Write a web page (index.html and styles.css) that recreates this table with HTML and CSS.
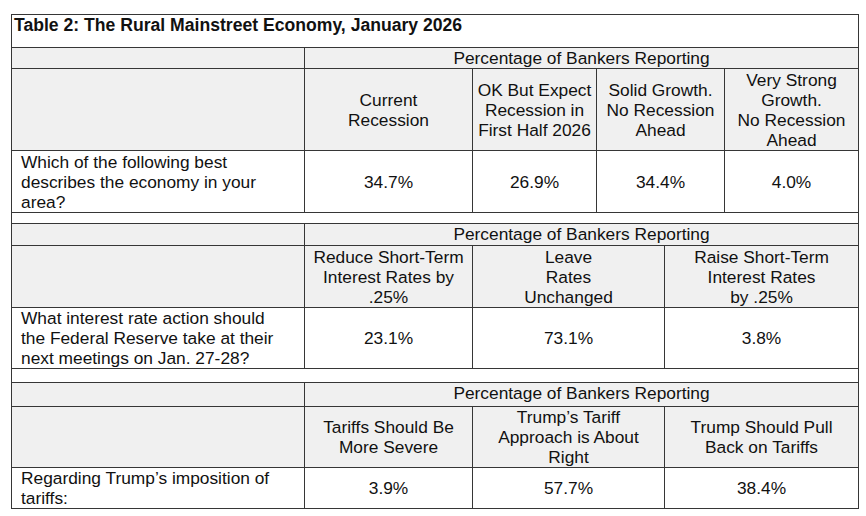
FILE: index.html
```html
<!DOCTYPE html>
<html lang="en">
<head>
<meta charset="utf-8">
<title>Table 2: The Rural Mainstreet Economy, January 2026</title>
<link rel="stylesheet" href="styles.css">
</head>
<body>
<table class="survey">
  <colgroup>
    <col class="c1"><col class="c2"><col class="c3"><col class="c4"><col class="c5"><col class="c6">
  </colgroup>
  <tbody>
    <tr class="r-title"><td colspan="6" class="title">Table 2: The Rural Mainstreet Economy, January 2026</td></tr>

    <tr class="r-pct1 pct-row"><td></td><td colspan="5" class="pct">Percentage of Bankers Reporting</td></tr>
    <tr class="r-h1 head-row">
      <td></td>
      <td>Current<br>Recession</td>
      <td>OK But Expect<br>Recession in<br>First Half 2026</td>
      <td colspan="2">Solid Growth.<br>No Recession<br>Ahead</td>
      <td>Very Strong<br>Growth.<br>No Recession<br>Ahead</td>
    </tr>
    <tr class="r-d1 data-row">
      <td class="q">Which of the following best<br>describes the economy in your<br>area?</td>
      <td>34.7%</td><td>26.9%</td><td colspan="2">34.4%</td><td>4.0%</td>
    </tr>
    <tr class="r-s1 spacer"><td colspan="6"></td></tr>

    <tr class="r-pct2 pct-row"><td></td><td colspan="5" class="pct">Percentage of Bankers Reporting</td></tr>
    <tr class="r-h2 head-row">
      <td></td>
      <td>Reduce Short-Term<br>Interest Rates by<br>.25%</td>
      <td colspan="2">Leave<br>Rates<br>Unchanged</td>
      <td colspan="2">Raise Short-Term<br>Interest Rates<br>by .25%</td>
    </tr>
    <tr class="r-d2 data-row">
      <td class="q">What interest rate action should<br>the Federal Reserve take at their<br>next meetings on Jan. 27-28?</td>
      <td>23.1%</td><td colspan="2">73.1%</td><td colspan="2">3.8%</td>
    </tr>
    <tr class="r-s2 spacer"><td colspan="6"></td></tr>

    <tr class="r-pct3 pct-row"><td></td><td colspan="5" class="pct">Percentage of Bankers Reporting</td></tr>
    <tr class="r-h3 head-row">
      <td></td>
      <td>Tariffs Should Be<br>More Severe</td>
      <td colspan="2">Trump’s Tariff<br>Approach is About<br>Right</td>
      <td colspan="2">Trump Should Pull<br>Back on Tariffs</td>
    </tr>
    <tr class="r-d3 data-row">
      <td class="q">Regarding Trump’s imposition of<br>tariffs:</td>
      <td>3.9%</td><td colspan="2">57.7%</td><td colspan="2">38.4%</td>
    </tr>
  </tbody>
</table>
</body>
</html>
```

FILE: styles.css
```css
html, body {
  margin: 0;
  padding: 0;
  background: #ffffff;
}

body {
  padding: 14px 0 0 11px;
  font-family: "Liberation Sans", Arial, sans-serif;
  font-size: 17.33px;
  line-height: 20px;
  color: #111111;
}

.survey {
  border-collapse: collapse;
  table-layout: fixed;
  width: 847px;
}

.c1 { width: 293px; }
.c2 { width: 168px; }
.c3 { width: 124px; }
.c4 { width: 68px; }
.c5 { width: 60px; }
.c6 { width: 134px; }

.survey td {
  border: 1px solid #363636;
  padding: 0;
  text-align: center;
  vertical-align: middle;
  white-space: nowrap;
  overflow: hidden;
}

.title {
  font-weight: bold;
  font-size: 17.6px;
  text-align: left !important;
  vertical-align: top !important;
  padding: 0 2px !important;
  background: #ffffff;
}

.pct-row td {
  background: #f0f0f0;
  vertical-align: top;
}

.head-row td {
  background: #f0f0f0;
}

.data-row td {
  background: #ffffff;
}

.survey td.q {
  text-align: left;
  padding: 0 4px 0 9px;
}

.spacer td {
  background: #ffffff;
}

.r-title { height: 33px; }
.r-pct1 { height: 21px; }
.r-h1 { height: 82px; }
.r-d1 { height: 62px; }
.r-s1 { height: 11px; }
.r-pct2 { height: 22px; }
.r-h2 { height: 62px; }
.r-d2 { height: 61px; }
.r-s2 { height: 14px; }
.r-pct3 { height: 24px; }
.r-h3 { height: 61px; }
.r-d3 { height: 41px; }
```
